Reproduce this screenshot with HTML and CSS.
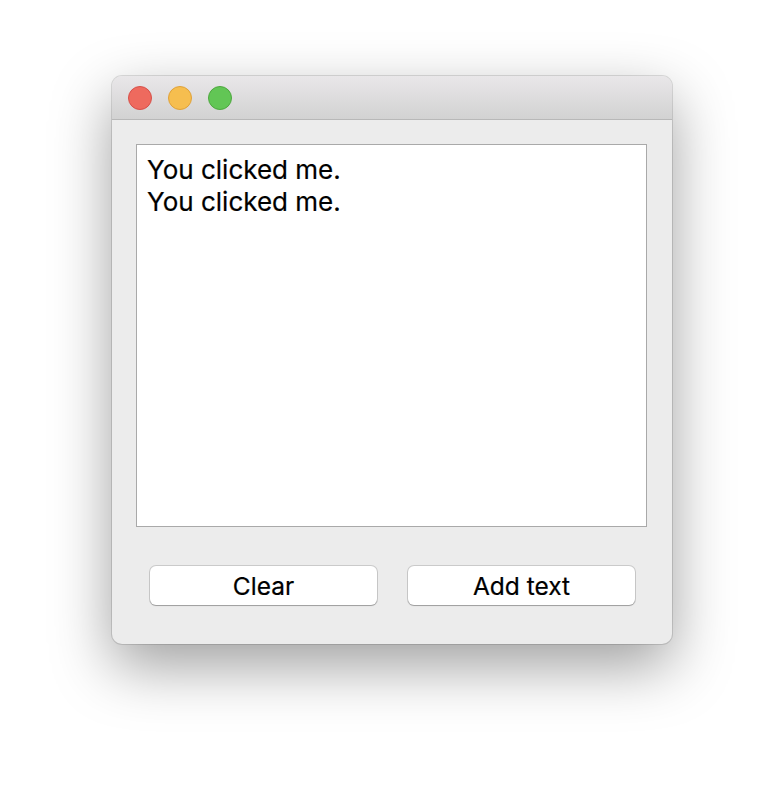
FILE: index.html
```html
<!DOCTYPE html>
<html>
<head>
<meta charset="utf-8">
<link rel="stylesheet" href="styles.css">
</head>
<body>
<div class="window">
  <div class="titlebar">
    <span class="light red"></span>
    <span class="light yellow"></span>
    <span class="light green"></span>
  </div>
  <div class="content">
    <div class="textarea">
      <div class="line">You clicked me.</div>
      <div class="line">You clicked me.</div>
    </div>
    <div class="buttons">
      <div class="btn">Clear</div>
      <div class="btn">Add text</div>
    </div>
  </div>
</div>
</body>
</html>
```
FILE: styles.css
```css
html, body {
  margin: 0;
  padding: 0;
  background: #ffffff;
}
body {
  width: 784px;
  height: 792px;
  padding: 76px 0 0 112px;
  box-sizing: border-box;
  font-family: "Inter", "Liberation Sans", Arial, sans-serif;
}
.window {
  width: 560px;
  height: 568px;
  background: #ececec;
  border-radius: 10px;
  box-shadow: 0 0 0 1px rgba(0,0,0,0.12), 0 22px 60px rgba(0,0,0,0.38);
  overflow: hidden;
  display: flex;
  flex-direction: column;
}
.titlebar {
  height: 43px;
  flex: none;
  background: linear-gradient(#e9e7e9, #d2d2d2);
  border-bottom: 1px solid #b8b8b8;
  display: flex;
  align-items: center;
  padding-left: 16px;
  gap: 16px;
}
.light {
  width: 24px;
  height: 24px;
  border-radius: 50%;
  box-sizing: border-box;
}
.red { background: #ee6a5e; border: 1px solid #d6504a; }
.yellow { background: #f6be4f; border: 1px solid #dfa13a; }
.green { background: #62c655; border: 1px solid #4ea73f; }
.content {
  padding: 24px 25px 0 24px;
  display: flex;
  flex-direction: column;
}
.textarea {
  height: 383px;
  background: #fff;
  border: 1px solid #a9a9a9;
  box-sizing: border-box;
  padding: 9px 10px;
  font-size: 26px;
  line-height: 32px;
  color: #000;
  -webkit-text-stroke: 0.2px #000;
}
.buttons {
  display: flex;
  gap: 31px;
  margin-top: 39px;
  padding-left: 14px;
}
.btn {
  width: 227px;
  height: 39px;
  box-sizing: border-box;
  background: #fff;
  border-radius: 6px;
  box-shadow: 0 0 0 1px rgba(0,0,0,0.14), 0 1px 1px rgba(0,0,0,0.22);
  display: flex;
  align-items: center;
  justify-content: center;
  font-size: 24.5px;
  color: #000;
  -webkit-text-stroke: 0.2px #000;
}
```
